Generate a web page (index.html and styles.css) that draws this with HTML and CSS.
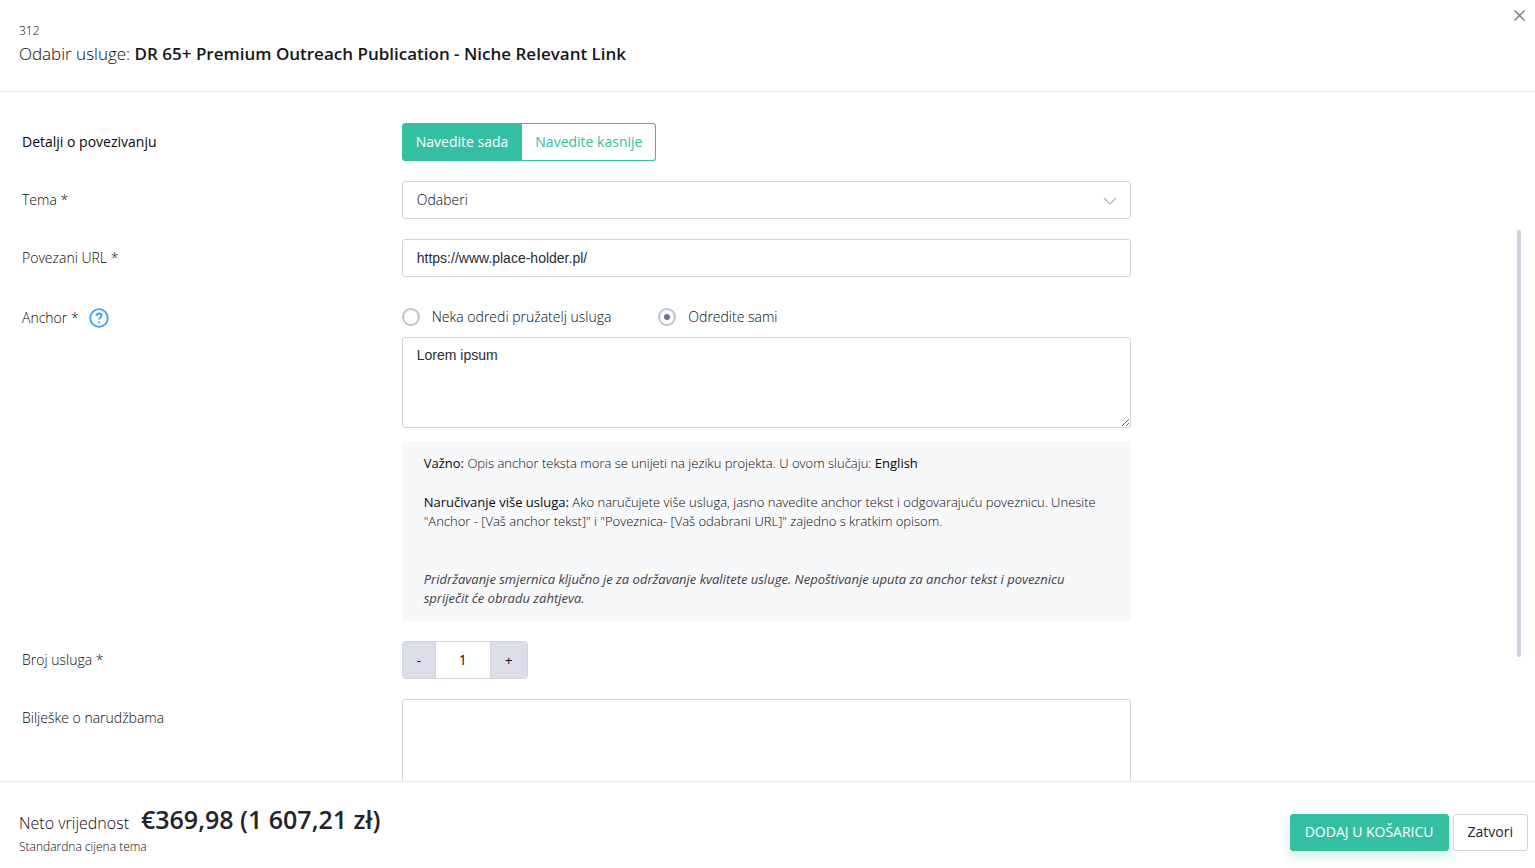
FILE: index.html
```html
<!DOCTYPE html>
<html lang="hr">
<head>
<meta charset="utf-8">
<meta name="viewport" content="width=device-width, initial-scale=1">
<title>Odabir usluge</title>
<link rel="stylesheet" href="styles.css">
</head>
<body>
<div class="modal">
  <header class="modal-header">
    <div class="service-id">312</div>
    <h1 class="modal-title">Odabir usluge: <strong>DR 65+ Premium Outreach Publication - Niche Relevant Link</strong></h1>
    <button class="close" type="button" aria-label="Zatvori prozor">
      <svg width="11" height="11" viewBox="0 0 11 11" aria-hidden="true"><path d="M.5.5l10 10M10.5.5l-10 10"/></svg>
    </button>
  </header>

  <main class="modal-body">
    <form class="form" id="order">
      <div class="row">
        <div class="label label-strong" id="details-label">Detalji o povezivanju</div>
        <div class="field">
          <div class="toggle" role="group" aria-labelledby="details-label">
            <button class="toggle-item active" type="button">Navedite sada</button>
            <button class="toggle-item" type="button">Navedite kasnije</button>
          </div>
        </div>
      </div>

      <div class="row">
        <label class="label" for="topic">Tema *</label>
        <div class="field select-wrap">
          <select class="control select" id="topic"><option>Odaberi</option></select>
          <svg class="chevron" width="14" height="8" viewBox="0 0 14 8" aria-hidden="true"><path d="M1 1l6 6 6-6"/></svg>
        </div>
      </div>

      <div class="row">
        <label class="label" for="url">Povezani URL *</label>
        <div class="field"><input class="control typed" id="url" type="text" value="https://www.place-holder.pl/"></div>
      </div>

      <div class="row">
        <div class="label label-anchor">
          <label for="anchor">Anchor *</label>
          <svg class="help" width="20" height="20" viewBox="0 0 20 20" aria-hidden="true"><circle cx="10" cy="10" r="8.8"/><path d="M7.4 8.1c0-1.6 1.1-2.6 2.6-2.6s2.6 1 2.6 2.3c0 1.9-2.5 1.9-2.5 3.6"/><path d="M10.1 13.4v1.9"/></svg>
        </div>
        <div class="field">
          <div class="radios">
            <label class="radio"><input type="radio" name="anchor-mode">Neka odredi pružatelj usluga</label>
            <label class="radio"><input type="radio" name="anchor-mode" checked>Odredite sami</label>
          </div>
          <textarea class="control typed area" id="anchor">Lorem ipsum</textarea>
          <div class="note">
            <p><strong>Važno:</strong> Opis anchor teksta mora se unijeti na jeziku projekta. U ovom slučaju: <strong>English</strong></p>
            <p><strong>Naručivanje više usluga:</strong> Ako naručujete više usluga, jasno navedite anchor tekst i odgovarajuću poveznicu. Unesite "Anchor - [Vaš anchor tekst]" i "Poveznica- [Vaš odabrani URL]" zajedno s kratkim opisom.</p>
            <p class="note-warning"><em>Pridržavanje smjernica ključno je za održavanje kvalitete usluge. Nepoštivanje uputa za anchor tekst i poveznicu spriječit će obradu zahtjeva.</em></p>
          </div>
        </div>
      </div>

      <div class="row">
        <label class="label" for="count">Broj usluga *</label>
        <div class="field">
          <div class="counter">
            <button class="step" type="button" aria-label="Manje">-</button>
            <input class="count" id="count" type="text" value="1">
            <button class="step step-plus" type="button" aria-label="Više">+</button>
          </div>
        </div>
      </div>

      <div class="row">
        <label class="label" for="notes">Bilješke o narudžbama</label>
        <div class="field"><textarea class="control typed area" id="notes"></textarea></div>
      </div>
    </form>
    <div class="scroll-thumb"></div>
  </main>

  <footer class="modal-footer">
    <div>
      <div class="total"><span class="total-label">Neto vrijednost</span><span class="total-value">€369,98 (1 607,21 zł)</span></div>
      <div class="total-note">Standardna cijena tema</div>
    </div>
    <div class="actions">
      <button class="btn btn-primary" type="submit" form="order">DODAJ U KOŠARICU</button>
      <button class="btn" type="button">Zatvori</button>
    </div>
  </footer>
</div>
</body>
</html>
```

FILE: styles.css
```css
* { box-sizing: border-box; }

body {
  margin: 0;
  background: #fff;
  color: #08090b;
  font: 300 14px/20px "Open Sans", sans-serif;
}

button, input, select, textarea { font: inherit; color: inherit; margin: 0; }
button { cursor: pointer; font-weight: 400; }
p { margin: 0; }
strong { font-weight: 500; }

.modal { display: flex; flex-direction: column; height: 100vh; }

.modal-header {
  position: relative;
  flex: none;
  padding: 21px 19px 24px;
  border-bottom: 1px solid #e9eaec;
}
.service-id { font-size: 12px; }
.modal-title { margin: 0; font-size: 17px; line-height: 26px; font-weight: 300; }
.modal-title strong { color: #15171a; font-weight: 600; }
.close {
  position: absolute;
  top: 10px;
  right: 10px;
  display: flex;
  padding: 0;
  border: 0;
  background: none;
}
.close path { stroke: #777; stroke-width: 1.4; fill: none; }

.modal-body { position: relative; flex: 1; min-height: 0; overflow: hidden; }
.form { display: flex; flex-direction: column; gap: 20px; padding: 31px 9px 31px 7px; }
.row { display: flex; align-items: flex-start; }
.label {
  display: flex;
  align-items: center;
  width: 25%;
  height: 38px;
  padding: 0 15px;
}
.label-strong { font-weight: 500; }
.label-anchor { height: 42px; gap: 10px; }
.field { width: 50%; padding: 0 15px; }

.help circle { fill: none; stroke: #36a3f7; stroke-width: 1.8; }
.help path { fill: none; stroke: #36a3f7; stroke-width: 1.9; }

.toggle { display: inline-flex; vertical-align: top; height: 38px; }
.toggle-item {
  padding: 0 13px;
  border: 1px solid #34bfa3;
  background: #fff;
  color: #34bfa3;
}
.toggle-item:first-child { border-radius: 3px 0 0 3px; }
.toggle-item:last-child { border-left: 0; border-radius: 0 3px 3px 0; }
.toggle-item.active { background: #34bfa3; color: #fff; }

.control {
  display: block;
  width: 100%;
  height: 38px;
  padding: 0 14px;
  border: 1px solid #d1d3e0;
  border-radius: 3px;
  background: #fff;
}
.typed { color: #2b2d33; font-family: "Liberation Sans", Arial, sans-serif; }
.select-wrap { position: relative; }
.select { appearance: none; }
.chevron { position: absolute; right: 29px; top: 16px; pointer-events: none; }
.chevron path { fill: none; stroke: #b0aec6; stroke-width: 1.2; }
.area { height: 91px; padding: 7px 14px; resize: vertical; }

.radios { display: flex; align-items: center; gap: 47px; height: 40px; }
.radio { display: flex; align-items: center; gap: 12px; }
.radio input {
  display: grid;
  place-items: center;
  appearance: none;
  width: 18px;
  height: 18px;
  border: 2px solid #bdc3d4;
  border-radius: 50%;
}
.radio input:checked::before {
  content: "";
  width: 6px;
  height: 6px;
  border-radius: 50%;
  background: #6b7499;
}

.note {
  display: grid;
  gap: 19px;
  margin-top: 13px;
  padding: 13px 22px 12px;
  border-radius: 4px;
  background: #f7f8fa;
  font-size: 13px;
  line-height: 1.5;
}
.note-warning { padding-top: 19px; font-weight: 400; color: #3f4047; }

.counter {
  display: inline-flex;
  vertical-align: top;
  height: 38px;
  border: 1px solid #d1d3e0;
  border-radius: 3px;
  overflow: hidden;
}
.step { width: 32px; padding: 0; border: 0; background: #dbdee8; font-size: 13px; }
.step-plus { width: 36px; }
.count {
  width: 56px;
  padding: 0;
  border: solid #d1d3e0;
  border-width: 0 1px;
  font-weight: 400;
  text-align: center;
}

.scroll-thumb {
  position: absolute;
  top: 20%;
  right: 14px;
  width: 4px;
  height: 62%;
  border-radius: 4px;
  background: #cdd1e0;
}

.modal-footer {
  flex: none;
  display: flex;
  align-items: center;
  justify-content: space-between;
  padding: 23px 7px 9px 19px;
  border-top: 1px solid #e9eaec;
}
.total { display: flex; align-items: baseline; gap: 12px; line-height: 29px; }
.total-label { font-size: 16px; line-height: 20px; }
.total-value { color: #212529; font-size: 25px; font-weight: 600; }
.total-note { font-size: 12px; line-height: 25px; }
.actions { display: flex; gap: 4px; }
.btn {
  height: 37px;
  padding: 0 14px;
  border: 1px solid #d1d3e0;
  border-radius: 3px;
  background: #fff;
  color: #212529;
}
.btn-primary {
  border-color: #34bfa3;
  background: #34bfa3;
  color: #fff;
  box-shadow: 0 5px 10px 2px rgba(52, 191, 163, 0.19);
}
```
